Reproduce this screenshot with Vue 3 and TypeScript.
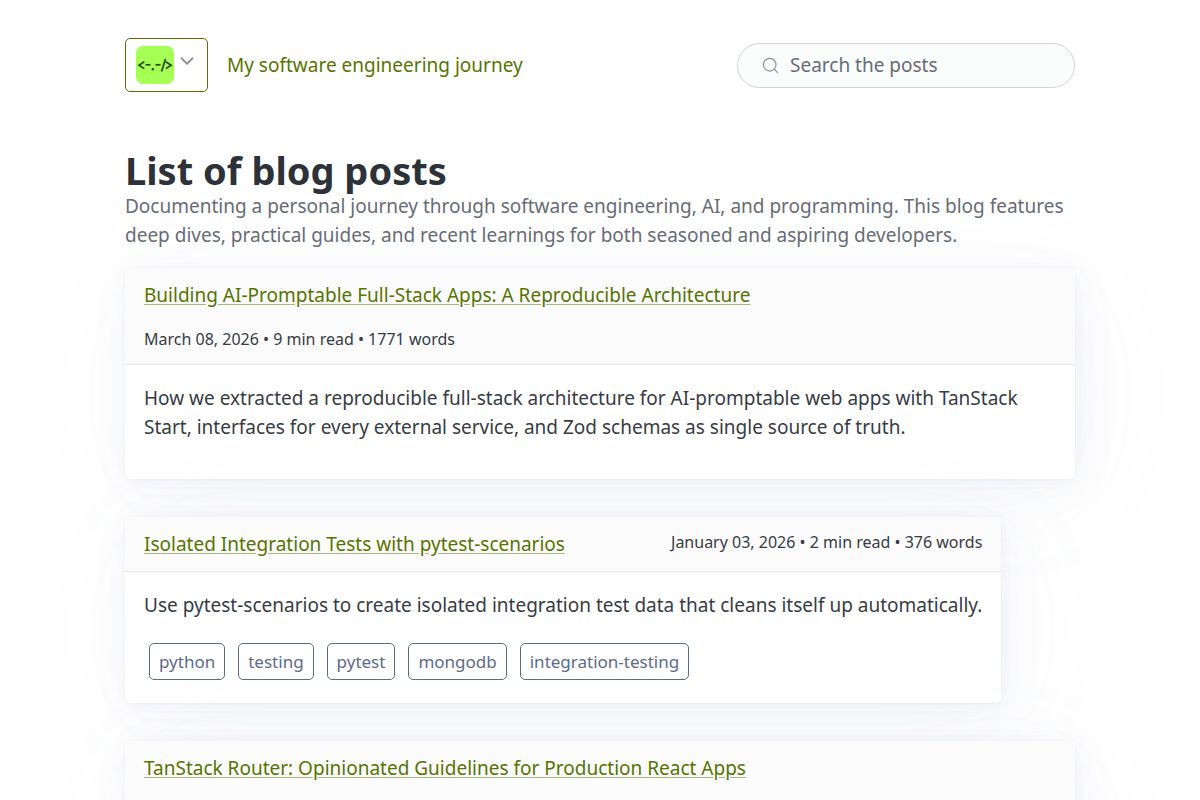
<script setup lang="ts">
import { ref } from 'vue'

interface Post {
  title: string
  meta?: string
  summary?: string
  tags: string[]
  wide?: boolean
}

const query = ref('')

const posts: Post[] = [
  {
    title: 'Building AI-Promptable Full-Stack Apps: A Reproducible Architecture',
    meta: 'March 08, 2026 • 9 min read • 1771 words',
    summary:
      'How we extracted a reproducible full-stack architecture for AI-promptable web apps with TanStack Start, interfaces for every external service, and Zod schemas as single source of truth.',
    tags: [],
    wide: true,
  },
  {
    title: 'Isolated Integration Tests with pytest-scenarios',
    meta: 'January 03, 2026 • 2 min read • 376 words',
    summary:
      'Use pytest-scenarios to create isolated integration test data that cleans itself up automatically.',
    tags: ['python', 'testing', 'pytest', 'mongodb', 'integration-testing'],
  },
  {
    title: 'TanStack Router: Opinionated Guidelines for Production React Apps',
    tags: [],
    wide: true,
  },
]
</script>

<template>
  <div class="page">
    <header class="top">
      <nav class="brand">
        <button class="menu" type="button" aria-haspopup="true" aria-label="Menu">
          <svg class="logo" viewBox="0 0 38 38" aria-hidden="true">
            <rect width="38" height="38" rx="7" fill="#a5ff55" />
            <g fill="none" stroke="#2b4a14" stroke-width="1.7">
              <path d="M8.3 15.8 3 19.2l5.300 3.400" />
              <path d="M9.500 18.800h5" />
              <path d="M19.500 18.800h5" />
              <path d="M29.500 13 25.500 25.500" />
              <path d="M29.800 15.800l5.300 3.400-5.300 3.400" />
            </g>
            <circle cx="16.800" cy="23.200" r="1.200" fill="#2b4a14" />
          </svg>
          <svg class="chevron" viewBox="0 0 24 24" aria-hidden="true">
            <path d="m6 9 6 6 6-6" />
          </svg>
        </button>
        <a class="tagline" href="#">My software engineering journey</a>
      </nav>
      <form class="search" role="search" @submit.prevent>
        <svg class="glass" viewBox="0 0 24 24" aria-hidden="true">
          <circle cx="11" cy="11" r="8" />
          <path d="m21 21-4.350-4.350" />
        </svg>
        <input v-model="query" type="search" placeholder="Search the posts" aria-label="Search the posts" />
      </form>
    </header>

    <main>
      <h1>List of blog posts</h1>
      <p class="intro">
        Documenting a personal journey through software engineering, AI, and programming. This blog
        features deep dives, practical guides, and recent learnings for both seasoned and aspiring
        developers.
      </p>

      <article v-for="post in posts" :key="post.title" class="card" :class="{ wide: post.wide }">
        <header class="card-head">
          <a class="title" href="#">{{ post.title }}</a>
          <small v-if="post.meta">{{ post.meta }}</small>
        </header>
        <div class="card-body">
          <p v-if="post.summary">{{ post.summary }}</p>
          <div v-if="post.tags.length" class="tags">
            <button v-for="tag in post.tags" :key="tag" class="tag" type="button">{{ tag }}</button>
          </div>
        </div>
      </article>
    </main>
  </div>
</template>

<style>
body {
  margin: 0;
  background: #fff;
}
</style>

<style scoped>
* {
  box-sizing: border-box;
}

.page {
  max-width: 950px;
  margin: 0 auto;
  padding: 38px 0;
  font: 19px/29px 'Noto Sans', sans-serif;
  color: #373c44;
}

.top {
  display: flex;
  align-items: center;
  justify-content: space-between;
  gap: 19px;
  margin-bottom: 57px;
}

.brand {
  display: flex;
  align-items: center;
  gap: 19px;
}

.menu {
  display: flex;
  align-items: flex-start;
  gap: 2px;
  padding: 7px 9px 7px 10px;
  border: 1px solid #577400;
  border-radius: 5px;
  background: #fff;
}

.logo {
  width: 38px;
  height: 38px;
}

.chevron {
  width: 22px;
  height: 22px;
  margin-top: 4px;
  fill: none;
  stroke: #8c919b;
  stroke-width: 2;
  stroke-linecap: round;
  stroke-linejoin: round;
}

.tagline {
  color: #577400;
  text-decoration: none;
}

.search {
  display: flex;
  align-items: center;
  gap: 10px;
  flex: 0 1 338px;
  min-width: 0;
  padding: 7px 23px;
  border: 1px solid #d0d4da;
  border-radius: 80px;
  background: #fbfcfc;
}

.glass {
  flex: none;
  width: 19px;
  height: 19px;
  fill: none;
  stroke: #8c919b;
  stroke-width: 1.5;
  stroke-linecap: round;
}

.search input {
  flex: 1;
  width: 100%;
  min-width: 0;
  height: 29px;
  padding: 0;
  border: 0;
  outline: 0;
  appearance: none;
  background: transparent;
  font: inherit;
  color: #373c44;
}

.search input::placeholder {
  color: #676c76;
  opacity: 1;
}

h1 {
  margin: 0;
  font-size: 38px;
  line-height: 43px;
  font-weight: 700;
  color: #2d3138;
}

.intro {
  margin: 0 0 18px;
  color: #676c76;
}

.card {
  width: fit-content;
  max-width: 100%;
  margin-bottom: 38px;
  border-radius: 5px;
  background: #fff;
  box-shadow:
    0 1px 3px rgba(129, 145, 181, 0.017),
    1px 1px 8px rgba(129, 145, 181, 0.024),
    1px 2px 14px rgba(129, 145, 181, 0.03),
    2px 4px 26px rgba(129, 145, 181, 0.036),
    4px 8px 48px rgba(129, 145, 181, 0.043),
    10px 19px 114px rgba(129, 145, 181, 0.06),
    0 0 0 1px rgba(129, 145, 181, 0.015);
}

.wide {
  width: 100%;
}

.card-head {
  display: flex;
  flex-wrap: wrap;
  align-items: flex-start;
  justify-content: space-between;
  gap: 17px 19px;
  padding: 13px 19px 12px;
  border-bottom: 1px solid #e5e8eb;
  border-radius: 5px 5px 0 0;
  background: #fbfbfc;
}

.wide .card-head {
  flex-direction: column;
  flex-wrap: nowrap;
  justify-content: flex-start;
  min-height: 97px;
}

.title {
  color: #577400;
  text-decoration: underline;
  text-decoration-color: rgba(87, 116, 0, 0.5);
  text-underline-offset: 2px;
}

small {
  font-size: 16px;
  line-height: 25px;
}

.card-body {
  padding: 19px 19px 18px;
}

.card-body p {
  margin: 0 0 19px;
}

.tags {
  display: flex;
  flex-wrap: wrap;
  gap: 13px;
  padding: 4px 5px 5px;
}

.tag {
  padding: 5px 9px;
  border: 1px solid #5d6b89;
  border-radius: 5px;
  background: #fff;
  font: 17px/25px 'Noto Sans', sans-serif;
  color: #5d6b89;
}
</style>
